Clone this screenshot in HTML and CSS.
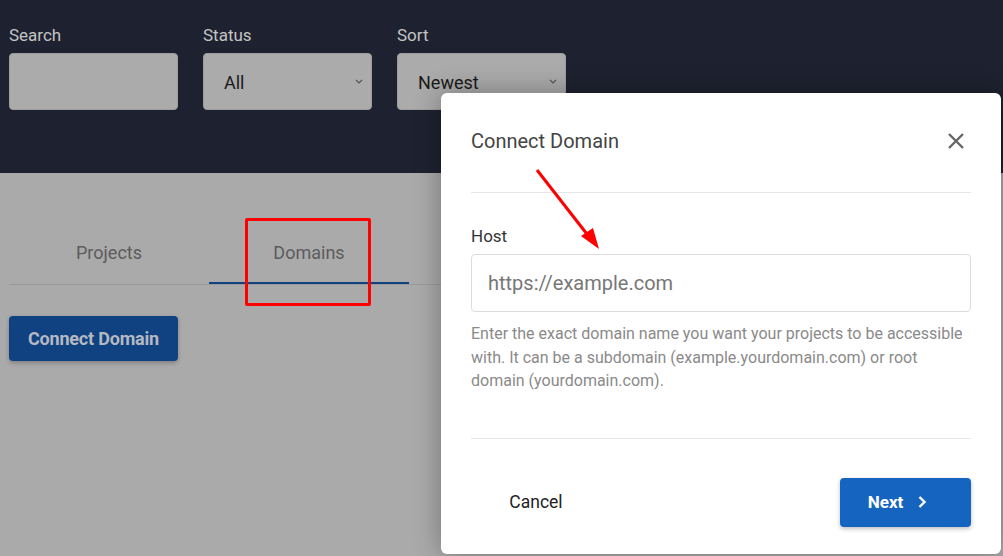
FILE: index.html
```html
<!DOCTYPE html>
<html>
<head>
<meta charset="utf-8">
<link rel="stylesheet" href="styles.css">
</head>
<body>
<header class="topbar">
  <div class="filters">
    <div class="field">
      <label class="flabel">Search</label>
      <div class="fbox"></div>
    </div>
    <div class="field">
      <label class="flabel">Status</label>
      <div class="fbox select"><span>All</span>
        <svg class="chev" width="8" height="5" viewBox="0 0 8 5"><path d="M1 1l3 3 3-3" fill="none" stroke="#555" stroke-width="1.2"/></svg>
      </div>
    </div>
    <div class="field">
      <label class="flabel">Sort</label>
      <div class="fbox select"><span>Newest</span>
        <svg class="chev" width="8" height="5" viewBox="0 0 8 5"><path d="M1 1l3 3 3-3" fill="none" stroke="#555" stroke-width="1.2"/></svg>
      </div>
    </div>
  </div>
</header>
<main class="content">
  <div class="tabs">
    <div class="tab">Projects</div>
    <div class="tab active">Domains</div>
    <div class="tab"></div>
  </div>
  <button class="connect">Connect Domain</button>
</main>

<div class="highlight"></div>

<div class="modal">
  <div class="mhead">
    <h2 class="mtitle">Connect Domain</h2>
    <svg class="close" width="18" height="18" viewBox="0 0 18 18"><path d="M2 2L16 16M16 2L2 16" stroke="#666" stroke-width="2.4" fill="none"/></svg>
  </div>
  <div class="mbody">
    <label class="hlabel">Host</label>
    <div class="hinput">https://example.com</div>
    <p class="help">Enter the exact domain name you want your projects to be accessible with. It can be a subdomain (example.yourdomain.com) or root domain (yourdomain.com).</p>
  </div>
  <div class="mfoot">
    <button class="cancel">Cancel</button>
    <button class="next">Next
      <svg width="10" height="14" viewBox="0 0 10 14"><path d="M2.5 2l5 5-5 5" fill="none" stroke="#fff" stroke-width="2.4"/></svg>
    </button>
  </div>
</div>

<svg class="arrow" width="1003" height="556" viewBox="0 0 1003 556">
  <line x1="537" y1="170" x2="590" y2="238" stroke="#f00" stroke-width="3"/>
  <path d="M599 249 L581 236 L593 228 Z" fill="#f00"/>
</svg>
</body>
</html>
```

FILE: styles.css
```css
* { box-sizing: border-box; }
html, body { margin: 0; padding: 0; }
body {
  width: 1003px;
  height: 556px;
  overflow: hidden;
  background: #aaaaaa;
  font-family: Roboto, "Liberation Sans", sans-serif;
  position: relative;
}
.topbar {
  background: #1e2230;
  height: 173px;
  padding: 25px 9px 0;
}
.filters {
  display: flex;
  gap: 25px;
}
.field {
  display: flex;
  flex-direction: column;
  width: 169px;
}
.flabel {
  color: #c4c4c4;
  font-size: 17px;
  line-height: 20px;
  height: 20px;
  margin-bottom: 8px;
}
.fbox {
  height: 57px;
  background: #ababab;
  border: 1px solid #9d9d9d;
  border-radius: 4px;
  display: flex;
  align-items: center;
  justify-content: space-between;
  padding: 0 8px 0 20px;
  color: #1a1a1a;
  font-size: 18px;
}
.fbox span { padding-top: 1px; }
.content {
  padding: 49px 9px 0;
}
.tabs {
  display: flex;
  border-bottom: 1px solid #999;
  width: 440px;
}
.tab {
  width: 200px;
  height: 62px;
  line-height: 62px;
  text-align: center;
  color: #5c5c5c;
  font-size: 18px;
}
.tab.active {
  border-bottom: 2px solid #0f4280;
}
.tab:last-child { width: 40px; }
.connect {
  margin-top: 31px;
  width: 169px;
  height: 45px;
  border: none;
  border-radius: 4px;
  background: #104181;
  color: #b4b9c2;
  font-family: Roboto, "Liberation Sans", sans-serif;
  font-weight: 700;
  font-size: 18px;
  letter-spacing: -0.2px;
  box-shadow: 0 2px 4px rgba(0,0,0,0.25);
}
.highlight {
  position: absolute;
  left: 245px;
  top: 218px;
  width: 126px;
  height: 88px;
  border: 3px solid #ff0000;
  border-radius: 2px;
}
.modal {
  position: absolute;
  left: 441px;
  top: 93px;
  width: 560px;
  height: 461px;
  background: #fff;
  border-radius: 6px;
  box-shadow: 0 0 28px rgba(0,0,0,0.32);
  display: flex;
  flex-direction: column;
}
.mhead {
  margin: 0 30px;
  height: 100px;
  border-bottom: 1px solid #e6e6e6;
  display: flex;
  align-items: center;
  justify-content: space-between;
  padding-bottom: 3px;
}
.mtitle {
  margin: 0;
  font-size: 20px;
  font-weight: 400;
  color: #444;
}
.close { margin-right: 6px; }
.mbody {
  margin: 0 30px;
  padding: 33px 0 45px;
  border-bottom: 1px solid #e6e6e6;
}
.hlabel {
  display: block;
  font-size: 17px;
  line-height: 20px;
  color: #333;
  margin-bottom: 8px;
}
.hinput {
  height: 58px;
  border: 1px solid #dcdcdc;
  border-radius: 4px;
  padding: 0 16px;
  display: flex;
  align-items: center;
  font-size: 20px;
  color: #777;
}
.help {
  margin: 10px 0 0;
  font-size: 16px;
  line-height: 23.5px;
  color: #8a8a8a;
}
.mfoot {
  margin: 0 30px;
  padding-top: 39px;
  display: flex;
  justify-content: space-between;
  align-items: flex-start;
}
.cancel {
  width: 130px;
  height: 49px;
  border: none;
  background: transparent;
  font-family: Roboto, "Liberation Sans", sans-serif;
  font-size: 17.5px;
  color: #222;
}
.next {
  width: 131px;
  height: 49px;
  border: none;
  border-radius: 4px;
  background: #1565c0;
  color: #fff;
  font-family: Roboto, "Liberation Sans", sans-serif;
  font-weight: 700;
  font-size: 17px;
  display: flex;
  align-items: center;
  justify-content: center;
  gap: 14px;
  padding-right: 22px;
  box-shadow: 0 2px 4px rgba(0,0,0,0.25);
}
.arrow {
  position: absolute;
  left: 0;
  top: 0;
  pointer-events: none;
}
```
